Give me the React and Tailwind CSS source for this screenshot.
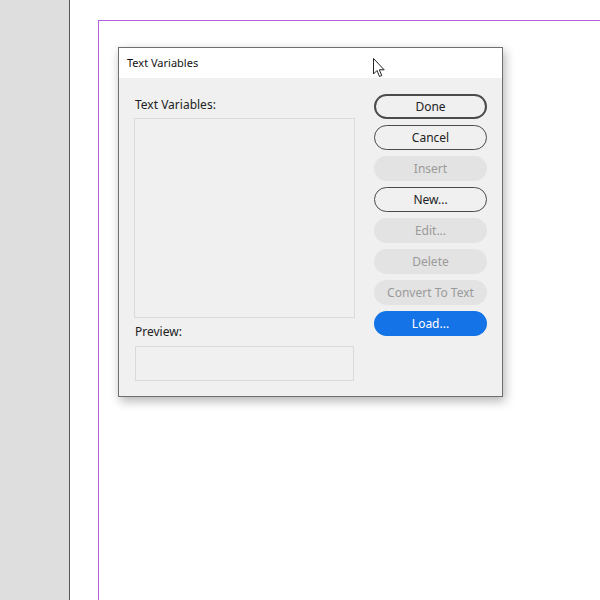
import React from 'react';

function Btn({ children, kind }) {
  const base = 'h-[25px] w-[113px] rounded-full flex items-center justify-center text-[12px] leading-none';
  const styles = {
    primary: 'border-2 border-[#4b4b4b] text-[#222]',
    normal: 'border border-[#4b4b4b] text-[#222]',
    disabled: 'bg-[#e3e3e3] text-[#9a9a9a]',
    blue: 'bg-[#1473e6] text-white',
  };
  return <div className={`${base} ${styles[kind]}`}>{children}</div>;
}

export default function App() {
  return (
    <div className="w-[600px] h-[600px] flex overflow-hidden bg-white" style={{ fontFamily: '"Noto Sans", "Open Sans", sans-serif' }}>
      {/* left pasteboard */}
      <div className="w-[70px] h-full bg-[#dedede] border-r border-[#595959]" />

      <div className="flex-1 pt-[20px] pl-[28px]">
        {/* page frame */}
        <div className="relative h-[600px] border-l border-t border-[#b15fe0] pt-[26px] pl-[19px]">
          {/* dialog */}
          <div className="w-[385px] h-[350px] border border-[#6e6e6e] bg-[#f0f0f0] shadow-[2px_4px_10px_rgba(0,0,0,0.3)] flex flex-col">
            <div className="h-[30px] bg-white flex items-center pl-[8px] text-[11px] text-[#111]">Text Variables</div>
            <div className="flex-1 flex pl-[15px] pt-[16px]">
              <div className="w-[221px] flex flex-col">
                <div className="text-[12px] text-[#222] pl-[1px] mt-[2px] h-[18px] leading-[18px]">Text Variables:</div>
                <div className="mt-[4px] h-[200px] border border-[#dadada]" />
                <div className="text-[12px] text-[#222] pl-[1px] mt-[5px] h-[18px] leading-[18px]">Preview:</div>
                <div className="mt-[5px] ml-[1px] w-[219px] h-[35px] border border-[#dadada]" />
              </div>
              <div className="ml-[19px] flex flex-col gap-[6px]">
                <Btn kind="primary">Done</Btn>
                <Btn kind="normal">Cancel</Btn>
                <Btn kind="disabled">Insert</Btn>
                <Btn kind="normal">New...</Btn>
                <Btn kind="disabled">Edit...</Btn>
                <Btn kind="disabled">Delete</Btn>
                <Btn kind="disabled">Convert To Text</Btn>
                <Btn kind="blue">Load...</Btn>
              </div>
            </div>
          </div>

          {/* mouse cursor */}
          <svg className="absolute left-[274px] top-[37px]" width="13" height="20" viewBox="0 0 13 20">
            <path d="M0.5 0.5 L0.5 16 L4 12.5 L6.5 18.5 L8.8 17.5 L6.3 11.8 L11.2 11.8 Z" fill="white" stroke="#222" strokeWidth="1" strokeLinejoin="miter" />
          </svg>
        </div>
      </div>
    </div>
  );
}
